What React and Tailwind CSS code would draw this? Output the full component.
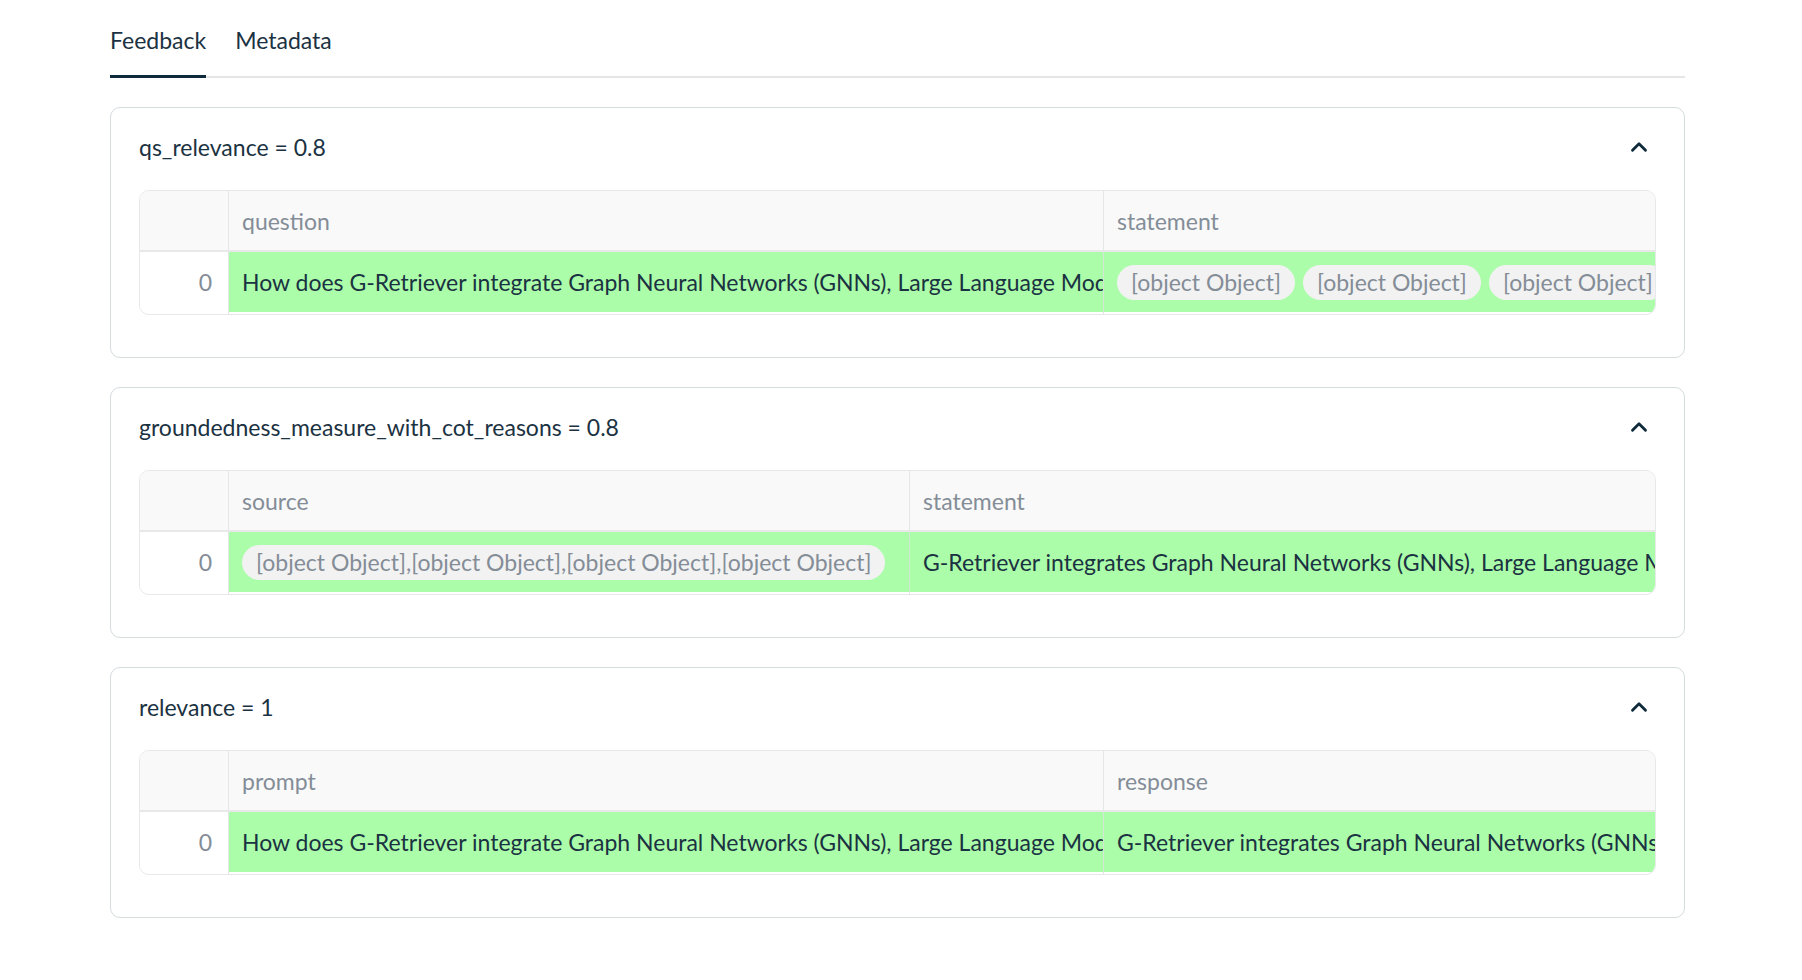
import { ChevronUp } from "lucide-react";

const font = { fontFamily: "Lato, 'Noto Sans', sans-serif" };

const Pill = ({ children }) => (
  <span className="inline-flex h-[35px] shrink-0 items-center rounded-full bg-[#f2f2f2] px-[14px] leading-none text-[#848d97] whitespace-nowrap">
    {children}
  </span>
);

const DataTable = ({ columns }) => (
  <div className="mt-[25px] h-[125px] overflow-hidden rounded-[10px] border border-[#e6e8ea]">
    <div className="flex h-[61px] border-b-2 border-[#e8e8e8] bg-[#f9f9f9]">
      <div className="w-[89px] shrink-0 border-r border-[#e4e6e8]" />
      {columns.map((col, i) => (
        <div
          key={col.name}
          className={`flex shrink-0 items-center px-[13px] text-[#848d97] ${i < columns.length - 1 ? "border-r border-[#e4e6e8]" : ""}`}
          style={{ width: col.width }}
        >
          {col.name}
        </div>
      ))}
    </div>
    <div className="flex h-[60px]">
      <div className="flex w-[89px] shrink-0 items-center justify-end border-r border-[#e4e6e8] bg-white px-[16px] text-[#848d97]">
        0
      </div>
      {columns.map((col, i) => (
        <div
          key={col.name}
          className={`flex shrink-0 items-center gap-[8px] overflow-hidden whitespace-nowrap bg-[#abfda9] px-[13px] text-[#1b3242] ${i < columns.length - 1 ? "border-r border-[#d3e8d2]" : ""}`}
          style={{ width: col.width }}
        >
          {col.cell}
        </div>
      ))}
    </div>
    <div className="flex h-[2px]">
      <div className="w-[89px] shrink-0 border-r border-[#e4e6e8]" />
      {columns.map((col, i) => (
        <div
          key={col.name}
          className={`shrink-0 ${i < columns.length - 1 ? "border-r border-[#e4e6e8]" : ""}`}
          style={{ width: col.width }}
        />
      ))}
    </div>
  </div>
);

const FeedbackCard = ({ title, columns }) => (
  <div className="rounded-[10px] border border-[#d6dbde] px-[28px] pb-[42px] pt-[21px]">
    <div className="flex h-[36px] items-center justify-between">
      <div className="text-[#1b3242]">{title}</div>
      <ChevronUp className="mr-[4px] h-[26px] w-[26px] text-[#0f2a3a]" strokeWidth={2.6} />
    </div>
    <DataTable columns={columns} />
  </div>
);

const question = "How does G-Retriever integrate Graph Neural Networks (GNNs), Large Language Models (LLMs), and Retrieval-Augmented Generation (RAG)?";
const answer = "G-Retriever integrates Graph Neural Networks (GNNs), Large Language Models (LLMs), and Retrieval-Augmented Generation (RAG) to enable conversational graph QA.";

export default function App() {
  const cards = [
    {
      title: "qs_relevance = 0.8",
      columns: [
        { name: "question", width: 875, cell: question },
        {
          name: "statement",
          width: 553,
          cell: (
            <>
              <Pill>[object Object]</Pill>
              <Pill>[object Object]</Pill>
              <Pill>[object Object]</Pill>
            </>
          ),
        },
      ],
    },
    {
      title: "groundedness_measure_with_cot_reasons = 0.8",
      columns: [
        {
          name: "source",
          width: 681,
          cell: <Pill>[object Object],[object Object],[object Object],[object Object]</Pill>,
        },
        { name: "statement", width: 747, cell: answer },
      ],
    },
    {
      title: "relevance = 1",
      columns: [
        { name: "prompt", width: 875, cell: question },
        { name: "response", width: 553, cell: answer },
      ],
    },
  ];

  return (
    <div className="min-h-screen bg-white text-[23px] leading-[36px]" style={font}>
      <div className="ml-[110px] w-[1575px]">
        <div className="flex gap-[29px] border-b-2 border-[#e6e6e6] pt-[22px]">
          <div className="-mb-[2px] border-b-[3px] border-[#0f2a3a] pb-[17px] text-[#1b3242]">Feedback</div>
          <div className="pb-[18px] text-[#1b3242]">Metadata</div>
        </div>
        <div className="mt-[29px] flex flex-col gap-[29px]">
          {cards.map((c) => (
            <FeedbackCard key={c.title} title={c.title} columns={c.columns} />
          ))}
        </div>
      </div>
    </div>
  );
}
